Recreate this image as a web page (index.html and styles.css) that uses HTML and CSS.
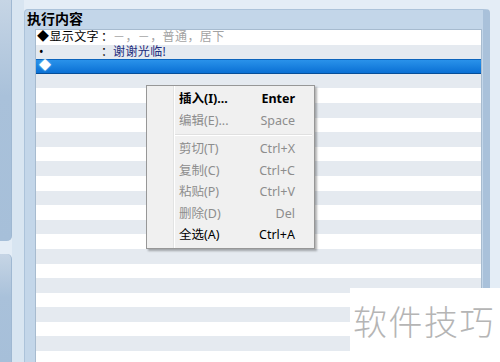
FILE: index.html
```html
<!DOCTYPE html>
<html lang="zh-CN">
<head>
    <meta charset="UTF-8">
    <title>执行内容</title>
    <link rel="stylesheet" href="styles.css">
</head>
<body>
  <div class="app">
    <div class="side">
      <div class="side-block side-top"></div>
      <div class="side-block side-bot"></div>
    </div>
    <div class="strip"></div>
    <div class="panel">
      <div class="panel-title">执行内容</div>
      <div class="list">
        <div class="row">
          <span class="key">◆显示文字</span><span class="colon">：</span><span class="val val-gray">－，－，普通，居下</span>
        </div>
        <div class="row">
          <span class="key key-dot">•</span><span class="colon">：</span><span class="val val-blue">谢谢光临!</span>
        </div>
        <div class="row row-sel">
          <span class="key key-sel">◆</span>
        </div>
        <div class="row"></div><div class="row"></div><div class="row"></div><div class="row"></div>
        <div class="row"></div><div class="row"></div><div class="row"></div><div class="row"></div>
        <div class="row"></div><div class="row"></div><div class="row"></div><div class="row"></div>
        <div class="row"></div><div class="row"></div><div class="row"></div><div class="row"></div>
        <div class="row"></div><div class="row"></div><div class="row"></div>
      </div>
    </div>
  </div>

  <div class="menu">
    <div class="item item-bold"><span>插入(I)...</span><span>Enter</span></div>
    <div class="item item-off"><span>编辑(E)...</span><span>Space</span></div>
    <div class="sep"></div>
    <div class="item item-off"><span>剪切(T)</span><span>Ctrl+X</span></div>
    <div class="item item-off"><span>复制(C)</span><span>Ctrl+C</span></div>
    <div class="item item-off"><span>粘贴(P)</span><span>Ctrl+V</span></div>
    <div class="item item-off"><span>删除(D)</span><span>Del</span></div>
    <div class="item"><span>全选(A)</span><span>Ctrl+A</span></div>
  </div>

  <div class="mark">软件技巧</div>
</body>
</html>
```

FILE: styles.css
```css
body {
    margin: 0;
    width: 500px;
    height: 362px;
    overflow: hidden;
    background: #e4edf6;
    font-family: "Noto Sans", "Noto Sans CJK SC", sans-serif;
    font-size: 12.5px;
    position: relative;
}
.app {
    display: flex;
    height: 362px;
}
.side {
    width: 12px;
    display: flex;
    flex-direction: column;
    gap: 13px;
}
.side-block {
    background: linear-gradient(#c6d5e5, #a9c1da 40%, #a6bfd9);
    border-right: 1px solid #9fb8d2;
    box-sizing: border-box;
}
.side-top {
    height: 241px;
    border-radius: 0 0 5px 0;
}
.side-bot {
    flex: 1;
    border-radius: 0 5px 0 0;
}
.strip {
    width: 12px;
    background: #d8e5f1;
}
.panel {
    width: 466px;
    margin-top: 9px;
    background: #c3d6e9;
    border: 1px solid #acc3da;
    border-right: 7px solid #a9c1da;
    border-bottom: none;
    border-radius: 4px 4px 0 0;
    box-sizing: border-box;
    overflow: hidden;
}
.panel-title {
    height: 19px;
    line-height: 17px;
    padding-left: 2px;
    font-weight: bold;
    font-size: 14px;
    color: #000;
}
.list {
    margin-left: 10px;
    width: 447px;
    height: 400px;
    background: #fff;
    border: 1px solid #a7bbcf;
    box-sizing: border-box;
    font-size: 12px;
}
.row {
    height: 14.6px;
    line-height: 14.6px;
    display: flex;
    white-space: nowrap;
    box-sizing: border-box;
}
.row:nth-child(even) {
    background: #e5eaf0;
}
.key {
    width: 64px;
    padding-left: 1px;
    color: #000;
    letter-spacing: 0.4px;
}
.key-dot {
    padding-left: 3px;
    width: 62px;
}
.colon {
    width: 12px;
    color: #000;
}
.val-gray {
    color: #a3a3a3;
    letter-spacing: 0.4px;
}
.val-blue {
    color: #1e2c7c;
    letter-spacing: 0.4px;
}
.row-sel {
    background: linear-gradient(#2a92ea, #0a70d4);
    border-top: 1px solid #0c64bc;
    border-bottom: 1px solid #064e98;
    line-height: 12.6px;
}
.key-sel {
    color: #fff;
    padding-left: 3px;
    text-shadow: 0 0 2px #9fe0ff;
}

.menu {
    position: absolute;
    left: 146px;
    top: 85px;
    width: 169px;
    padding: 2px 0;
    box-sizing: border-box;
    background: linear-gradient(to right, #f0f0f0 26px, #e2e3e3 26px, #e2e3e3 27px, #fff 27px, #fff 28px, #f0f0f0 28px);
    border: 1px solid #979797;
    box-shadow: 2px 2px 2px rgba(0, 0, 0, 0.3);
}
.item {
    height: 21.5px;
    line-height: 21.5px;
    display: flex;
    justify-content: space-between;
    padding: 0 19px 0 32px;
    color: #000;
}
.item-bold {
    font-weight: bold;
}
.item-off {
    color: #8d8d8d;
}
.sep {
    height: 1px;
    margin: 3px 2px 2px 28px;
    background: #e0e0e0;
    border-bottom: 1px solid #fff;
}

.mark {
    position: absolute;
    left: 350px;
    top: 288px;
    right: 0;
    bottom: 0;
    background: #fff;
    padding: 16px 0 0 3px;
    font-family: "Noto Sans CJK SC", sans-serif;
    font-weight: 300;
    font-size: 34px;
    line-height: 1;
    letter-spacing: 1.5px;
    color: #b5b5b5;
    white-space: nowrap;
}
```
